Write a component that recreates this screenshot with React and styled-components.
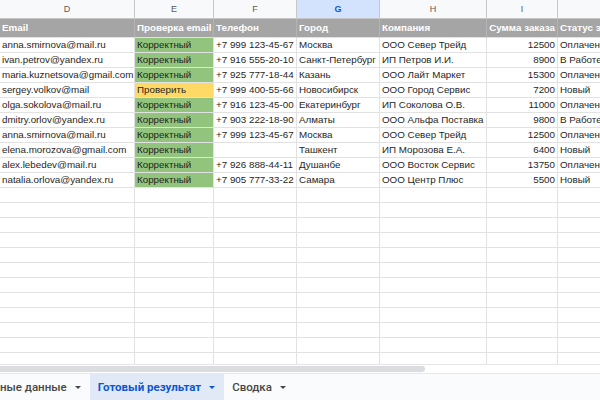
import styled, { createGlobalStyle } from "styled-components";

const GlobalStyle = createGlobalStyle`
  html, body {
    margin: 0;
    padding: 0;
    background: #ffffff;
  }
  body {
    font-family: "Liberation Sans", Arial, sans-serif;
  }
  * {
    box-sizing: border-box;
  }
`;

const columns = "135px 79px 83px 83px 107px 71px 120px";

const Page = styled.div`
  width: 600px;
  height: 400px;
  display: flex;
  flex-direction: column;
  overflow: hidden;
`;

const Sheet = styled.div`
  flex: 1;
  overflow: hidden;
  display: flex;
  flex-direction: column;
`;

const LetterRow = styled.div`
  display: grid;
  grid-template-columns: ${columns};
  height: 19px;
  flex-shrink: 0;
  background: #f8f9fa;
  border-bottom: 1px solid #c7c7c7;
`;

const Letter = styled.div`
  display: flex;
  align-items: center;
  justify-content: center;
  font-size: 9px;
  color: ${(p) => (p.$active ? "#0b57d0" : "#575a5e")};
  font-weight: ${(p) => (p.$active ? 700 : 400)};
  background: ${(p) => (p.$active ? "#d3e3fd" : "transparent")};
  border-right: 1px solid #c7c7c7;
`;

const Row = styled.div`
  display: grid;
  grid-template-columns: ${columns};
  height: ${(p) => (p.$head ? "19px" : "15px")};
  flex-shrink: 0;
`;

const Cell = styled.div`
  font-size: 9.8px;
  line-height: 14px;
  padding: 0 2px;
  white-space: nowrap;
  overflow: hidden;
  color: #1f1f1f;
  border-right: 1px solid #e2e2e2;
  border-bottom: 1px solid #e2e2e2;
  text-align: ${(p) => (p.$num ? "right" : "left")};
  background: ${(p) =>
    p.$tone === "ok" ? "#93c47d" : p.$tone === "check" ? "#ffd966" : "transparent"};
`;

const HeadCell = styled(Cell)`
  background: #a5a5a5;
  color: #ffffff;
  font-weight: 700;
  line-height: 18px;
  border-right-color: #b4b4b4;
  border-bottom-color: #e2e2e2;
`;

const ScrollTrack = styled.div`
  height: 9px;
  flex-shrink: 0;
  border-top: 1px solid #e6e6e6;
  background: #ffffff;
  padding-top: 1px;
`;

const ScrollThumb = styled.div`
  width: 425px;
  height: 6px;
  background: #dadce0;
  border-radius: 0 4px 4px 0;
`;

const TabBar = styled.div`
  height: 27px;
  flex-shrink: 0;
  display: flex;
  background: #f9fbfd;
  border-top: 1px solid #e6e8eb;
  margin-left: -${(p) => p.$shift}px;
`;

const Tab = styled.div`
  display: flex;
  align-items: center;
  gap: 8px;
  padding: 0 9px 0 8px;
  font-family: "Roboto", "Liberation Sans", sans-serif;
  font-size: 11.5px;
  font-weight: ${(p) => (p.$active ? 700 : 500)};
  color: ${(p) => (p.$active ? "#0b57d0" : "#444746")};
  background: ${(p) => (p.$active ? "#e1e9f7" : "transparent")};
  white-space: nowrap;
`;

const Caret = styled.span`
  width: 0;
  height: 0;
  border-left: 3px solid transparent;
  border-right: 3px solid transparent;
  border-top: 3.5px solid currentColor;
`;

const letters = ["D", "E", "F", "G", "H", "I", "J"];
const heads = ["Email", "Проверка email", "Телефон", "Город", "Компания", "Сумма заказа", "Статус заказа"];

const rows = [
  ["anna.smirnova@mail.ru", "ok", "+7 999 123-45-67", "Москва", "ООО Север Трейд", "12500", "Оплачено"],
  ["ivan.petrov@yandex.ru", "ok", "+7 916 555-20-10", "Санкт-Петербург", "ИП Петров И.И.", "8900", "В Работе"],
  ["maria.kuznetsova@gmail.com", "ok", "+7 925 777-18-44", "Казань", "ООО Лайт Маркет", "15300", "Оплачено"],
  ["sergey.volkov@mail", "check", "+7 999 400-55-66", "Новосибирск", "ООО Город Сервис", "7200", "Новый"],
  ["olga.sokolova@mail.ru", "ok", "+7 916 123-45-00", "Екатеринбург", "ИП Соколова О.В.", "11000", "Оплачено"],
  ["dmitry.orlov@yandex.ru", "ok", "+7 903 222-18-90", "Алматы", "ООО Альфа Поставка", "9800", "В Работе"],
  ["anna.smirnova@mail.ru", "ok", "+7 999 123-45-67", "Москва", "ООО Север Трейд", "12500", "Оплачено"],
  ["elena.morozova@gmail.com", "ok", "", "Ташкент", "ИП Морозова Е.А.", "6400", "Новый"],
  ["alex.lebedev@mail.ru", "ok", "+7 926 888-44-11", "Душанбе", "ООО Восток Сервис", "13750", "Оплачено"],
  ["natalia.orlova@yandex.ru", "ok", "+7 905 777-33-22", "Самара", "ООО Центр Плюс", "5500", "Новый"],
];

const emptyRows = Array.from({ length: 13 });

function App() {
  return (
    <Page>
      <GlobalStyle />
      <Sheet>
        <LetterRow>
          {letters.map((l) => (
            <Letter key={l} $active={l === "G"}>
              {l}
            </Letter>
          ))}
        </LetterRow>
        <Row $head>
          {heads.map((h, i) => (
            <HeadCell key={h} $num={i === 5}>
              {h}
            </HeadCell>
          ))}
        </Row>
        {rows.map((r, i) => (
          <Row key={i}>
            <Cell>{r[0]}</Cell>
            <Cell $tone={r[1]}>{r[1] === "ok" ? "Корректный" : "Проверить"}</Cell>
            <Cell>{r[2]}</Cell>
            <Cell>{r[3]}</Cell>
            <Cell>{r[4]}</Cell>
            <Cell $num>{r[5]}</Cell>
            <Cell>{r[6]}</Cell>
          </Row>
        ))}
        {emptyRows.map((_, i) => (
          <Row key={"e" + i}>
            {letters.map((l) => (
              <Cell key={l} />
            ))}
          </Row>
        ))}
      </Sheet>
      <ScrollTrack>
        <ScrollThumb />
      </ScrollTrack>
      <TabBar $shift={41}>
        <Tab>
          Исходные данные <Caret />
        </Tab>
        <Tab $active>
          Готовый результат <Caret />
        </Tab>
        <Tab>
          Сводка <Caret />
        </Tab>
      </TabBar>
    </Page>
  );
}

export default App;
